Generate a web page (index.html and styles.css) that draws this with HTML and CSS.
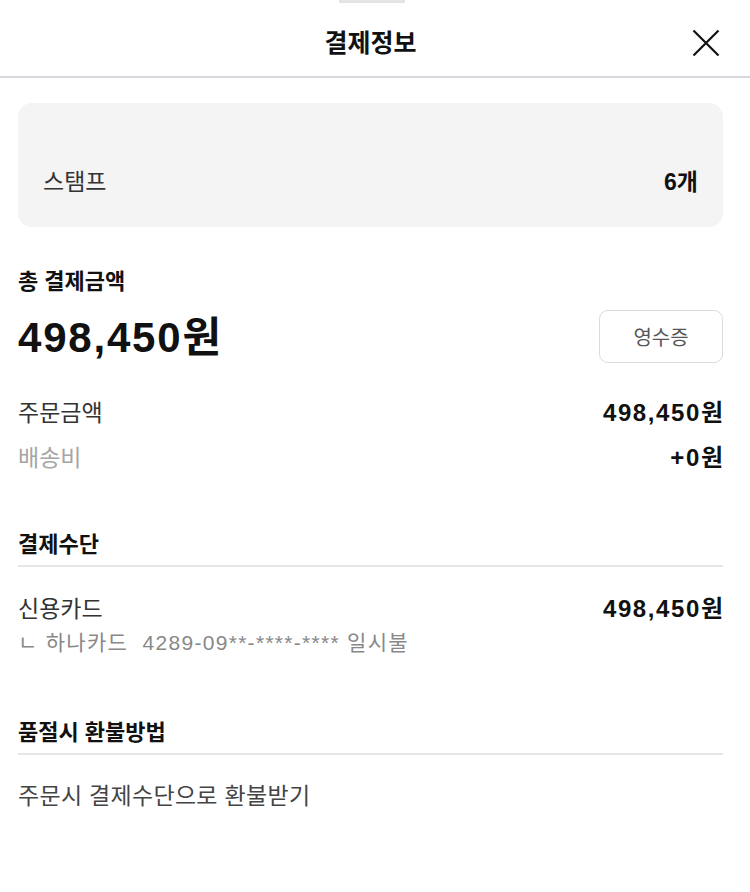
FILE: index.html
```html
<!DOCTYPE html>
<html lang="ko">

<head>
    <meta charset="UTF-8">
    <meta name="viewport" content="width=device-width, initial-scale=1.0">
    <title>결제정보</title>
    <link rel="stylesheet" href="styles.css">
</head>

<body>
    <div class="sheet">
        <div class="handle"></div>
        <div class="header">
            <h1 class="title">결제정보</h1>
            <span class="close-btn">
                <svg width="28" height="28" viewBox="0 0 28 28">
                    <path d="M1.5 1.5 L26.5 26.5 M26.5 1.5 L1.5 26.5" stroke="#111" stroke-width="2.2" fill="none" />
                </svg>
            </span>
        </div>

        <div class="content">
            <div class="stamp-box">
                <span class="stamp-label">스탬프</span>
                <span class="stamp-count">6개</span>
            </div>

            <div class="total">
                <h2 class="sec-title">총 결제금액</h2>
                <div class="total-row">
                    <span class="total-price">498,450원</span>
                    <button class="receipt-btn">영수증</button>
                </div>
            </div>

            <ul class="price-list">
                <li class="price-row"><span class="label">주문금액</span><span class="value">498,450원</span></li>
                <li class="price-row"><span class="label light">배송비</span><span class="value">+0원</span></li>
            </ul>

            <div class="section">
                <h2 class="sec-title line">결제수단</h2>
                <div class="price-row pay">
                    <span class="label">신용카드</span><span class="value">498,450원</span>
                </div>
                <p class="card-info">ㄴ 하나카드&nbsp; 4289-09**-****-**** 일시불</p>
            </div>

            <div class="section refund">
                <h2 class="sec-title line">품절시 환불방법</h2>
                <p class="refund-text">주문시 결제수단으로 환불받기</p>
            </div>
        </div>
    </div>
</body>

</html>
```

FILE: styles.css
```css
* {
    margin: 0;
    padding: 0;
    box-sizing: border-box;
}

body {
    background-color: #fff;
    font-family: "Liberation Sans", "Noto Sans CJK KR", sans-serif;
    color: #111;
}

li {
    list-style: none;
}

.sheet {
    width: 750px;
    position: relative;
}

/* 드래그 핸들 */
.handle {
    position: absolute;
    top: 0;
    left: 339px;
    width: 66px;
    height: 3px;
    background-color: #e4e4e4;
}

.header {
    height: 78px;
    padding: 10px 9px 0 0;
    display: flex;
    align-items: center;
    justify-content: center;
    border-bottom: 2px solid #d6dadf;
    position: relative;
}

.title {
    font-size: 25px;
    line-height: 32px;
    font-weight: bold;
}

.close-btn {
    position: absolute;
    right: 30px;
    top: 29px;
    line-height: 0;
}

.content {
    padding: 25px 27px 0 18px;
}

.stamp-box {
    height: 124px;
    background-color: #f4f4f4;
    border-radius: 14px;
    display: flex;
    justify-content: space-between;
    align-items: center;
    padding: 30px 25px 0 25px;
    font-size: 23px;
}

.stamp-label {
    color: #333;
}

.stamp-count {
    font-weight: bold;
}

.total {
    margin-top: 41px;
}

.sec-title {
    font-size: 22px;
    font-weight: bold;
    line-height: 28px;
}

.total-row {
    display: flex;
    justify-content: space-between;
    align-items: center;
    margin-top: 13px;
}

.total-price {
    font-size: 42px;
    line-height: 50px;
    font-weight: bold;
    letter-spacing: 1.8px;
    margin-top: 4px;
}

.receipt-btn {
    width: 124px;
    height: 53px;
    background-color: #fff;
    border: 1.5px solid #dcdcdc;
    border-radius: 9px;
    font-family: inherit;
    font-size: 20px;
    color: #555;
}

.price-list {
    margin-top: 25px;
}

.price-row {
    display: flex;
    justify-content: space-between;
    align-items: center;
    height: 45px;
    font-size: 23px;
}

.label {
    color: #333;
}

.label.light {
    color: #a5a5a5;
}

.value {
    font-size: 24px;
    font-weight: bold;
    letter-spacing: 1.6px;
    margin-right: -1.6px;
}

.section {
    margin-top: 53px;
}

.sec-title.line {
    padding-bottom: 6px;
    border-bottom: 2px solid #e6e6e6;
}

.pay {
    margin-top: 17px;
}

.card-info {
    font-size: 21px;
    line-height: 28px;
    letter-spacing: 1.3px;
    color: #888;
}

.refund {
    margin-top: 62px;
}

.refund-text {
    margin-top: 27px;
    font-size: 23px;
    line-height: 28px;
    letter-spacing: 0.3px;
    color: #444;
}
```
